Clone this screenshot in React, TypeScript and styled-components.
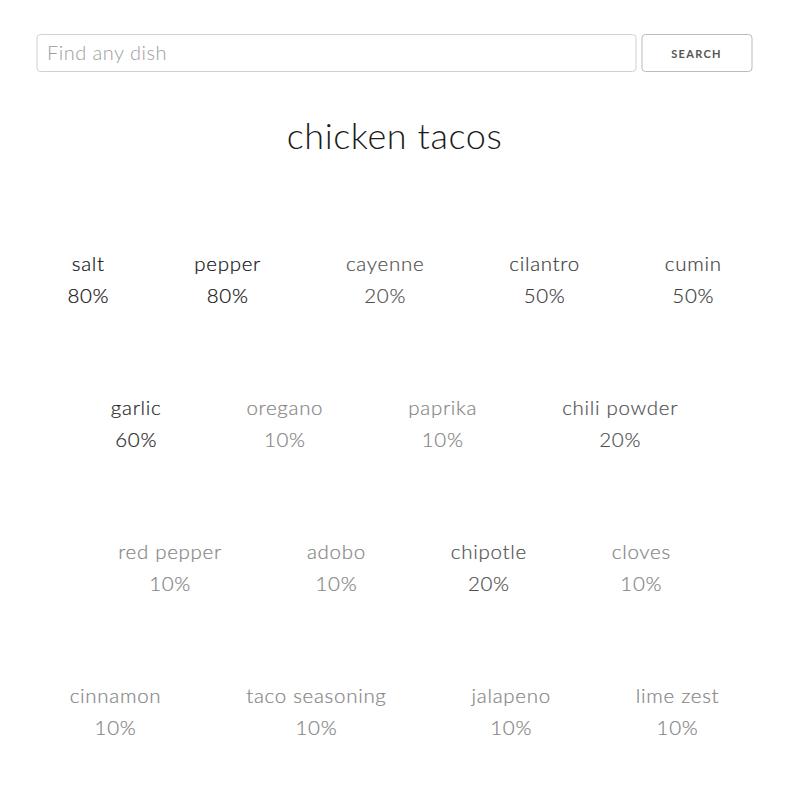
import React from "react";
import styled, { createGlobalStyle } from "styled-components";

const Global = createGlobalStyle`
  html, body { margin: 0; padding: 0; background: #fff; }
  body {
    font-family: "Lato", "Open Sans", sans-serif;
    color: #222;
    font-weight: 400;
  }
`;

const Page = styled.div`
  width: 789px;
  padding-top: 34px;
  box-sizing: border-box;
`;

const SearchBar = styled.form`
  display: flex;
  gap: 5px;
  width: 716px;
  margin: 0 auto;
  transform: translateX(-0.5px);
`;

const SearchInput = styled.input`
  flex: 1;
  height: 38px;
  box-sizing: border-box;
  padding: 4px 10px 6px;
  border: 1px solid #d1d1d1;
  border-radius: 4px;
  font-family: "Lato", sans-serif;
  font-size: 20px;
  font-weight: 300;
  letter-spacing: 0.5px;
  color: #222;
  outline: none;
  &::placeholder { color: #9c9c9c; }
`;

const SearchButton = styled.button`
  width: 111px;
  height: 38px;
  box-sizing: border-box;
  border: 1px solid #bbb;
  border-radius: 4px;
  background: transparent;
  color: #555;
  font-family: "Lato", sans-serif;
  font-size: 11px;
  font-weight: 700;
  letter-spacing: 1.3px;
  text-transform: uppercase;
  cursor: pointer;
`;

const Title = styled.h2`
  margin: 41px 0 0;
  text-align: center;
  font-size: 36px;
  font-weight: 300;
  line-height: 45px;
  letter-spacing: 0.6px;
  color: #1a1a1a;
`;

const List = styled.div`
  display: flex;
  flex-direction: column;
  gap: 80px;
  margin-top: 89px;
  padding-bottom: 40px;
`;

const Row = styled.div`
  display: flex;
  justify-content: center;
  gap: 85px;
`;

const Item = styled.div<{ $tone: string }>`
  display: flex;
  flex-direction: column;
  align-items: center;
  font-size: 20.5px;
  line-height: 32px;
  font-weight: 300;
  letter-spacing: 0.7px;
  color: ${(p) => p.$tone};
  white-space: nowrap;
  -webkit-text-stroke: 0.2px ${(p) => p.$tone};
`;

const Name = styled.span``;
const Pct = styled.span``;

const toneFor = (pct: number) => {
  if (pct >= 80) return "#111";
  if (pct >= 60) return "#262626";
  if (pct >= 50) return "#3c3c3c";
  if (pct >= 20) return "#505050";
  return "#858585";
};

const rows: [string, number][][] = [
  [["salt", 80], ["pepper", 80], ["cayenne", 20], ["cilantro", 50], ["cumin", 50]],
  [["garlic", 60], ["oregano", 10], ["paprika", 10], ["chili powder", 20]],
  [["red pepper", 10], ["adobo", 10], ["chipotle", 20], ["cloves", 10]],
  [["cinnamon", 10], ["taco seasoning", 10], ["jalapeno", 10], ["lime zest", 10]],
];

export default function App() {
  return (
    <Page>
      <Global />
      <SearchBar onSubmit={(e) => e.preventDefault()}>
        <SearchInput placeholder="Find any dish" />
        <SearchButton type="submit">Search</SearchButton>
      </SearchBar>
      <Title>chicken tacos</Title>
      <List>
        {rows.map((row, i) => (
          <Row key={i}>
            {row.map(([name, pct]) => (
              <Item key={name} $tone={toneFor(pct)}>
                <Name>{name}</Name>
                <Pct>{pct}%</Pct>
              </Item>
            ))}
          </Row>
        ))}
      </List>
    </Page>
  );
}
